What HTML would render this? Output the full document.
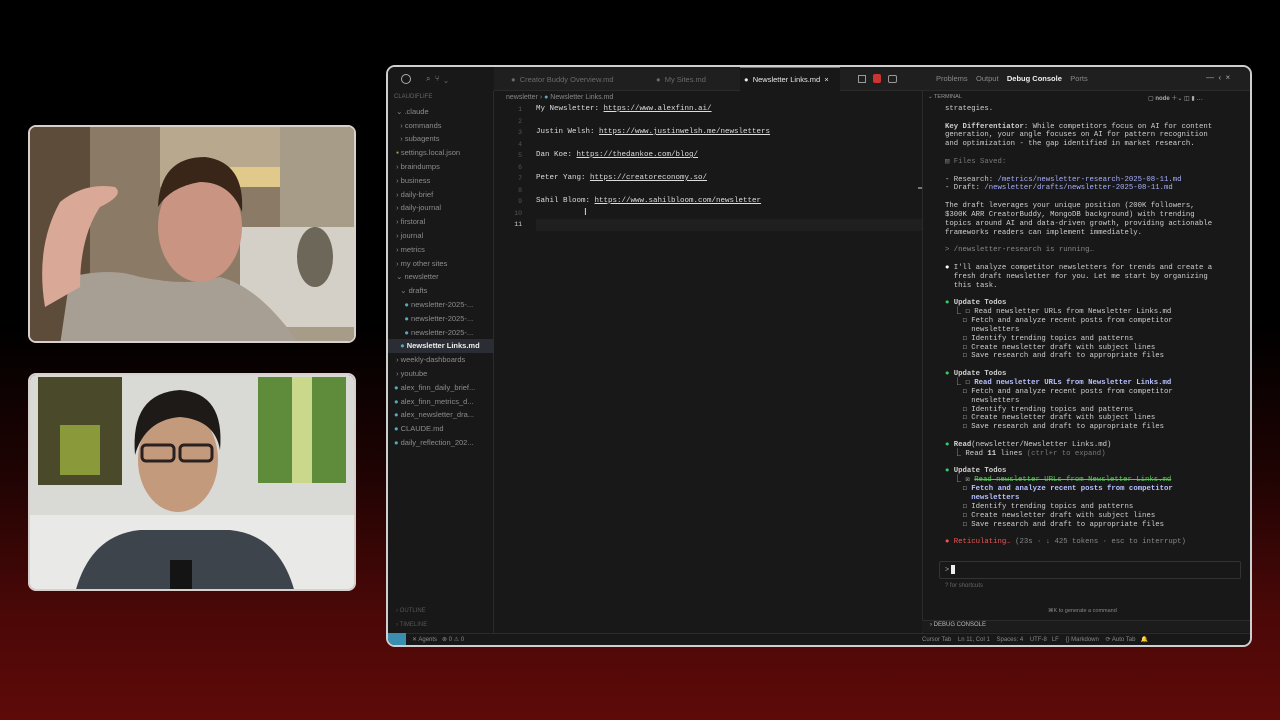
<!DOCTYPE html>
<html><head><meta charset="utf-8"><style>
*{margin:0;padding:0;box-sizing:border-box}
body{width:1280px;height:720px;overflow:hidden;background:linear-gradient(180deg,#000 0%,#000 45%,#1e0303 65%,#4a0807 85%,#5e0a09 100%);font-family:"Liberation Sans",sans-serif;position:relative}
.cam{position:absolute;left:28px;width:328px;border:2px solid #d9cfcc;border-radius:8px;overflow:hidden}
.win{position:absolute;left:386px;top:65px;width:866px;height:582px;border:2px solid #cfcfcf;border-radius:9px;background:#181818;overflow:hidden}
.abs{position:absolute}
.mono{font-family:"Liberation Mono",monospace}
.sb div{height:13.8px;font-size:7.5px;color:#8c8c8c;white-space:nowrap;line-height:13.8px}
.code div{height:23px;font-size:7.5px;color:#ddd;line-height:11.5px;position:relative}
.t{font-size:7.3px;line-height:8.85px;color:#cfcfcf;white-space:pre}
u{color:#dcdcdc}
</style></head><body>
<div class="cam" style="top:125px;height:218px">
<svg width="328" height="218" viewBox="0 0 328 218">
<rect width="328" height="218" fill="#8a7a66"/>
<rect x="0" y="0" width="60" height="218" fill="#5e4c3a"/>
<rect x="130" y="0" width="120" height="60" fill="#b8a98e"/>
<rect x="200" y="40" width="60" height="20" fill="#e0c98a"/>
<rect x="250" y="0" width="78" height="218" fill="#a69c88"/>
<rect x="210" y="100" width="118" height="100" fill="#d4d0c8"/>
<ellipse cx="285" cy="130" rx="18" ry="30" fill="#6c6758"/>
<path d="M30 218 L40 150 Q80 140 110 150 Q160 160 190 150 Q230 160 270 218Z" fill="#a89f94"/>
<ellipse cx="170" cy="100" rx="42" ry="55" fill="#c99582"/>
<path d="M128 80 Q130 30 175 30 Q215 35 212 85 Q200 55 170 55 Q140 60 128 80Z" fill="#3a2618"/>
<path d="M15 180 Q5 120 30 75 Q55 55 85 60 Q95 68 70 80 Q50 110 50 160Z" fill="#d9a896"/>
</svg></div>
<div class="cam" style="top:373px;height:218px">
<svg width="328" height="218" viewBox="0 0 328 218">
<rect width="328" height="218" fill="#d9d9d6"/>
<rect x="0" y="140" width="328" height="78" fill="#e9e9e7"/>
<rect x="8" y="2" width="84" height="108" fill="#4a4a2a"/>
<rect x="30" y="50" width="40" height="50" fill="#8a9a3a"/>
<rect x="228" y="2" width="88" height="106" fill="#5f8c3a"/>
<rect x="262" y="2" width="20" height="106" fill="#c9d88a"/>
<path d="M45 218 Q60 160 110 155 L200 155 Q250 160 265 218Z" fill="#3e444c"/>
<ellipse cx="148" cy="85" rx="40" ry="52" fill="#c49a7c"/>
<path d="M105 80 Q100 18 150 15 Q195 18 190 75 Q185 45 150 42 Q115 45 105 80Z" fill="#1e1a18"/>
<rect x="112" y="70" width="32" height="16" rx="4" fill="none" stroke="#2a2020" stroke-width="3"/>
<rect x="150" y="70" width="32" height="16" rx="4" fill="none" stroke="#2a2020" stroke-width="3"/>
<rect x="140" y="185" width="22" height="33" fill="#141414"/>
</svg></div>
<div class="win">
<div class="abs" style="left:0;top:0;width:866px;height:24px;background:#1f1f1f;border-bottom:1px solid #2b2b2b"></div>
<div class="abs" style="left:0;top:0;width:106px;height:24px;background:#181818"></div>
<div class="abs" style="left:13px;top:7px;width:10px;height:10px;border:1.5px solid #aaa;border-radius:50%"></div>
<div class="abs" style="left:38px;top:7px;color:#888;font-size:8px">⌕ &nbsp;⑂ &nbsp;⌄</div>
<div class="abs" style="left:123px;top:8px;font-size:7.5px;color:#6a6a6a">● &nbsp;Creator Buddy Overview.md</div>
<div class="abs" style="left:268px;top:8px;font-size:7.5px;color:#6a6a6a">● &nbsp;My Sites.md</div>
<div class="abs" style="left:352px;top:0;width:100px;height:24px;background:#181818;border-top:1px solid #4a7bd0"></div>
<div class="abs" style="left:356px;top:8px;font-size:7.5px;color:#e8e8e8">● &nbsp;Newsletter Links.md &nbsp;×</div>
<div class="abs" style="left:470px;top:8px;width:8px;height:8px;border:1px solid #999"></div>
<div class="abs" style="left:485px;top:7px;width:8px;height:9px;background:#c33;border-radius:2px"></div>
<div class="abs" style="left:500px;top:8px;width:9px;height:8px;border:1px solid #999;border-radius:2px"></div>
<div class="abs" style="left:548px;top:7px;font-size:7.5px;color:#8a8a8a">Problems &nbsp;&nbsp;&nbsp;Output &nbsp;&nbsp;&nbsp;<b style="color:#eee">Debug Console</b> &nbsp;&nbsp;&nbsp;Ports</div>
<div class="abs" style="left:818px;top:6px;font-size:8px;color:#aaa">— &nbsp;‹ &nbsp;×</div>
<div class="abs" style="left:0;top:24px;width:106px;height:546px;background:#181818;border-right:1px solid #2b2b2b"></div>
<div class="abs sb" style="left:6px;top:24px;width:100px">
<div style="font-size:6px;color:#666">CLAUDIFLIFE</div>
<div>&nbsp;⌄ .claude</div><div>&nbsp;&nbsp;&nbsp;› commands</div><div>&nbsp;&nbsp;&nbsp;› subagents</div>
<div>&nbsp;<span style="color:#9b3">▪</span> settings.local.json</div>
<div>&nbsp;› braindumps</div><div>&nbsp;› business</div><div>&nbsp;› daily-brief</div><div>&nbsp;› daily-journal</div><div>&nbsp;› firstoral</div><div>&nbsp;› journal</div><div>&nbsp;› metrics</div><div>&nbsp;› my other sites</div><div>&nbsp;⌄ newsletter</div><div>&nbsp;&nbsp;&nbsp;⌄ drafts</div>
<div>&nbsp;&nbsp;&nbsp;&nbsp;&nbsp;<span style="color:#5ab">●</span> newsletter-2025-...</div><div>&nbsp;&nbsp;&nbsp;&nbsp;&nbsp;<span style="color:#5ab">●</span> newsletter-2025-...</div><div>&nbsp;&nbsp;&nbsp;&nbsp;&nbsp;<span style="color:#5ab">●</span> newsletter-2025-...</div>
<div style="background:#2a2d33;color:#eee;margin-left:-6px;padding-left:10px">&nbsp;<span style="color:#5ab">●</span> <b>Newsletter Links.md</b></div>
<div>&nbsp;› weekly-dashboards</div><div>&nbsp;› youtube</div>
<div><span style="color:#5ab">●</span> alex_finn_daily_brief...</div><div><span style="color:#5ab">●</span> alex_finn_metrics_d...</div><div><span style="color:#5ab">●</span> alex_newsletter_dra...</div><div><span style="color:#5ab">●</span> CLAUDE.md</div><div><span style="color:#5ab">●</span> daily_reflection_202...</div>
</div>
<div class="abs" style="left:8px;top:541px;font-size:6px;color:#555">› OUTLINE</div>
<div class="abs" style="left:8px;top:555px;font-size:6px;color:#555">› TIMELINE</div>
<div class="abs" style="left:118px;top:27px;font-size:7px;color:#888">newsletter › <span style="color:#5ab">●</span> Newsletter Links.md</div>
<div class="abs mono" style="left:116px;top:37px;font-size:6.5px;color:#555;line-height:11.5px;text-align:right;width:18px">1<br>2<br>3<br>4<br>5<br>6<br>7<br>8<br>9<br>10<br><span style="color:#ccc">11</span></div>
<div class="abs" style="left:148px;top:152px;width:386px;height:12px;background:#1f1f1f"></div>
<div class="abs mono code" style="left:148px;top:37px;width:380px">
<div>My Newsletter: <u>https://www.alexfinn.ai/</u></div>
<div>Justin Welsh: <u>https://www.justinwelsh.me/newsletters</u></div>
<div>Dan Koe: <u>https://thedankoe.com/blog/</u></div>
<div>Peter Yang: <u>https://creatoreconomy.so/</u></div>
<div>Sahil Bloom: <u>https://www.sahilbloom.com/newsletter</u></div>
</div>
<div class="abs" style="left:196px;top:140px;color:#ddd;font-size:10px">I</div>
<div class="abs" style="left:530px;top:120px;width:6px;height:2px;background:#777"></div>
<div class="abs" style="left:534px;top:24px;width:330px;height:546px;background:#181818;border-left:1px solid #2b2b2b"></div>
<div class="abs" style="left:540px;top:27px;font-size:5.5px;color:#999">⌄ TERMINAL</div>
<div class="abs" style="left:760px;top:26px;font-size:6px;color:#aaa">▢ <b>node</b> ＋⌄ ◫ ▮ ⋯</div>
<div class="abs mono t" style="left:557px;top:29px">
strategies.

<b>Key Differentiator</b>: While competitors focus on AI for content
generation, your angle focuses on AI for pattern recognition
and optimization - the gap identified in market research.

<span style="color:#777">▤ Files Saved:</span>

- Research: <span style="color:#a8b0ff">/metrics/newsletter-research-2025-08-11.md</span>
- Draft: <span style="color:#a8b0ff">/newsletter/drafts/newsletter-2025-08-11.md</span>

The draft leverages your unique position (200K followers,
$300K ARR CreatorBuddy, MongoDB background) with trending
topics around AI and data-driven growth, providing actionable
frameworks readers can implement immediately.

<span style="color:#888">&gt; /newsletter-research is running…</span>

<span style="color:#fff">●</span> I'll analyze competitor newsletters for trends and create a
  fresh draft newsletter for you. Let me start by organizing
  this task.

<span style="color:#3c6">●</span> <b>Update Todos</b>
  ⎿ ☐ Read newsletter URLs from Newsletter Links.md
    ☐ Fetch and analyze recent posts from competitor
      newsletters
    ☐ Identify trending topics and patterns
    ☐ Create newsletter draft with subject lines
    ☐ Save research and draft to appropriate files

<span style="color:#3c6">●</span> <b>Update Todos</b>
  ⎿ ☐ <b style="color:#b8c0ff">Read newsletter URLs from Newsletter Links.md</b>
    ☐ Fetch and analyze recent posts from competitor
      newsletters
    ☐ Identify trending topics and patterns
    ☐ Create newsletter draft with subject lines
    ☐ Save research and draft to appropriate files

<span style="color:#3c6">●</span> <b>Read</b>(newsletter/Newsletter Links.md)
  ⎿ Read <b>11</b> lines <span style="color:#777">(ctrl+r to expand)</span>

<span style="color:#3c6">●</span> <b>Update Todos</b>
  ⎿ ☒ <s style="color:#5c5">Read newsletter URLs from Newsletter Links.md</s>
    ☐ <b style="color:#b8c0ff">Fetch and analyze recent posts from competitor
      newsletters</b>
    ☐ Identify trending topics and patterns
    ☐ Create newsletter draft with subject lines
    ☐ Save research and draft to appropriate files

<span style="color:#e55">● Reticulating…</span> <span style="color:#888">(23s · ↓ 425 tokens · esc to interrupt)</span>
</div>
<div class="abs" style="left:551px;top:494px;width:302px;height:18px;border:1px solid #333;border-radius:2px"></div>
<div class="abs" style="left:557px;top:498px;font-size:7px;color:#aaa">&gt; <span style="display:inline-block;width:4px;height:9px;background:#eee;vertical-align:middle"></span></div>
<div class="abs" style="left:557px;top:516px;font-size:6px;color:#666">? for shortcuts</div>
<div class="abs" style="left:660px;top:541px;font-size:5.5px;color:#888">⌘K to generate a command</div>
<div class="abs" style="left:534px;top:553px;width:330px;height:12px;background:#1c1c1c;border-top:1px solid #2b2b2b"></div>
<div class="abs" style="left:542px;top:555px;font-size:6px;color:#bbb">› DEBUG CONSOLE</div>
<div class="abs" style="left:0;top:566px;width:866px;height:14px;background:#181818;border-top:1px solid #2b2b2b"></div>
<div class="abs" style="left:0;top:566px;width:18px;height:14px;background:#3a8fb0"></div>
<div class="abs" style="left:24px;top:569px;font-size:6px;color:#888">✕ Agents &nbsp;&nbsp;⊗ 0 ⚠ 0</div>
<div class="abs" style="left:534px;top:569px;font-size:6px;color:#888">Cursor Tab &nbsp;&nbsp;&nbsp;Ln 11, Col 1 &nbsp;&nbsp;&nbsp;Spaces: 4 &nbsp;&nbsp;&nbsp;UTF-8 &nbsp;&nbsp;LF &nbsp;&nbsp;&nbsp;{} Markdown &nbsp;&nbsp;&nbsp;⟳ Auto Tab &nbsp;&nbsp;🔔</div>
</div>
</body></html>
